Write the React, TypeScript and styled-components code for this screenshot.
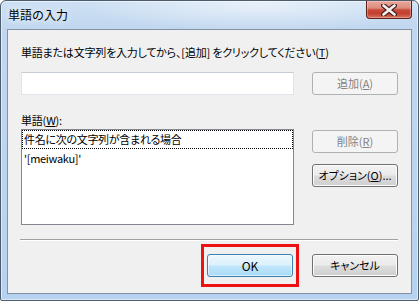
import React from "react";
import styled, { createGlobalStyle, css } from "styled-components";

const Global = createGlobalStyle`
  html, body { margin: 0; padding: 0; background: #ffffff; }
  body { font-family: "Noto Sans CJK JP", "Noto Sans", sans-serif; }
  #root { width: 419px; height: 301px; }
`;

const uiFont = css`
  font-family: "Noto Sans CJK JP", "Noto Sans", sans-serif;
  font-size: 11px;
  font-feature-settings: "palt";
  color: #000;
`;

const Window = styled.div`
  box-sizing: border-box;
  width: 419px;
  height: 301px;
  border: 1px solid #4d5c6c;
  border-radius: 6px 6px 2px 2px;
  background:
    radial-gradient(ellipse 180px 26px at 62% 4px, rgba(255, 255, 255, 0.55), rgba(255, 255, 255, 0) 100%),
    linear-gradient(180deg, #cde0f4 0px, #c1d7ef 28px, #bdd4ed 60%, #b6d2f0 100%);
  box-shadow: inset 0 0 0 1px rgba(255, 255, 255, 0.5);
  display: flex;
  flex-direction: column;
  overflow: hidden;
`;

const TitleBar = styled.div`
  height: 28px;
  flex: none;
  display: flex;
  justify-content: space-between;
  align-items: flex-start;
  padding: 0 6px 0 7px;
`;

const Title = styled.span`
  font-family: "Noto Sans CJK JP", "Noto Sans", sans-serif;
  font-size: 12px;
  color: #000;
  line-height: 28px;
  text-shadow: 0 0 6px rgba(255, 255, 255, 0.9), 0 0 10px rgba(255, 255, 255, 0.7);
`;

const CloseButton = styled.div`
  box-sizing: border-box;
  width: 46px;
  height: 18px;
  border: 1px solid #5e1f17;
  border-top: none;
  border-radius: 0 0 4px 4px;
  background: linear-gradient(
    180deg,
    #e9a99c 0%,
    #dc8c7e 42%,
    #c8493a 52%,
    #c43f2f 74%,
    #d77462 100%
  );
  box-shadow: inset 0 0 0 1px rgba(255, 230, 225, 0.35);
  display: flex;
  align-items: center;
  justify-content: center;
`;

const Client = styled.div`
  flex: 1;
  margin: 0 6px 6px;
  border: 1px solid #8393a5;
  background: #f0f0f0;
  padding: 14px 13px 6px;
  display: flex;
  flex-direction: column;
`;

const Label = styled.div<{ $top?: number }>`
  ${uiFont};
  letter-spacing: -0.2px;
  height: 16px;
  line-height: 16px;
  white-space: nowrap;
  margin-top: ${(p) => p.$top ?? 0}px;
`;

const Row = styled.div<{ $top: number }>`
  display: flex;
  align-items: flex-start;
  gap: 18px;
  margin-top: ${(p) => p.$top}px;
`;

const TextBox = styled.div`
  box-sizing: border-box;
  width: 273px;
  height: 23px;
  background: #ffffff;
  border: 1px solid #dfe4ea;
  border-top-color: #c6ccd3;
`;

const ListBox = styled.div`
  box-sizing: border-box;
  width: 273px;
  height: 96px;
  background: #ffffff;
  border: 1px solid #828790;
  display: flex;
  flex-direction: column;
`;

const ListItem = styled.div<{ $focused?: boolean }>`
  ${uiFont};
  letter-spacing: -0.3px;
  box-sizing: border-box;
  height: 19px;
  line-height: 17px;
  padding: 0 1px;
  white-space: nowrap;
  border: 1px solid transparent;
  ${(p) =>
    p.$focused &&
    css`
      border: 1px dotted #000;
    `}
`;

const ButtonColumn = styled.div`
  display: flex;
  flex-direction: column;
  gap: 11px;
  padding-top: 1px;
`;

type Variant = "normal" | "disabled" | "default";

const Button = styled.div<{ $variant?: Variant }>`
  ${uiFont};
  box-sizing: border-box;
  width: 86px;
  height: 23px;
  border-radius: 3px;
  display: flex;
  align-items: center;
  justify-content: center;
  line-height: 1;
  white-space: nowrap;
  ${(p) =>
    p.$variant === "disabled"
      ? css`
          border: 1px solid #adb2b5;
          background: #f4f4f4;
          color: #838383;
        `
      : p.$variant === "default"
      ? css`
          border: 1px solid #3c7fb1;
          background: linear-gradient(180deg, #ecf7fd 0%, #dcf1fc 48%, #c0e6fb 52%, #a9daf5 100%);
          box-shadow: inset 0 0 0 1px rgba(255, 255, 255, 0.55);
          font-size: 12px;
        `
      : css`
          border: 1px solid #707070;
          background: linear-gradient(180deg, #f2f2f2 0%, #ebebeb 48%, #dddddd 52%, #cfcfcf 100%);
          box-shadow: inset 0 0 0 1px #fcfcfc;
        `}
`;

const Separator = styled.div`
  height: 0;
  border-top: 1px solid #a0a0a0;
  border-bottom: 1px solid #ffffff;
  margin: 14px 0 3px -1px;
`;

const Footer = styled.div`
  display: flex;
  justify-content: flex-end;
  align-items: center;
  gap: 13px;
`;

const Highlight = styled.div`
  border: 3px solid #ee1111;
  padding: 7px 3px;
`;

const CloseGlyph = () => (
  <svg width="16" height="12" viewBox="0 0 16 12">
    <path d="M2.5 1.5 L13.5 10.5 M13.5 1.5 L2.5 10.5" stroke="#4a2420" strokeWidth="5" strokeLinecap="round" />
    <path d="M2.5 1.5 L13.5 10.5 M13.5 1.5 L2.5 10.5" stroke="#f4f0ef" strokeWidth="2.6" strokeLinecap="round" />
  </svg>
);

export default function App() {
  return (
    <>
      <Global />
      <Window>
        <TitleBar>
          <Title>単語の入力</Title>
          <CloseButton>
            <CloseGlyph />
          </CloseButton>
        </TitleBar>
        <Client>
          <Label>
            単語または文字列を入力してから、[追加] をクリックしてください(<u>T</u>)
          </Label>
          <Row $top={12}>
            <TextBox />
            <Button $variant="disabled">
              追加(<u>A</u>)
            </Button>
          </Row>
          <Label $top={17}>
            単語(<u>W</u>):
          </Label>
          <Row $top={1}>
            <ListBox>
              <ListItem $focused>件名に次の文字列が含まれる場合</ListItem>
              <ListItem>'[meiwaku]'</ListItem>
            </ListBox>
            <ButtonColumn>
              <Button $variant="disabled">
                削除(<u>R</u>)
              </Button>
              <Button>
                オプション(<u>O</u>)...
              </Button>
            </ButtonColumn>
          </Row>
          <Separator />
          <Footer>
            <Highlight>
              <Button $variant="default">OK</Button>
            </Highlight>
            <Button>キャンセル</Button>
          </Footer>
        </Client>
      </Window>
    </>
  );
}
